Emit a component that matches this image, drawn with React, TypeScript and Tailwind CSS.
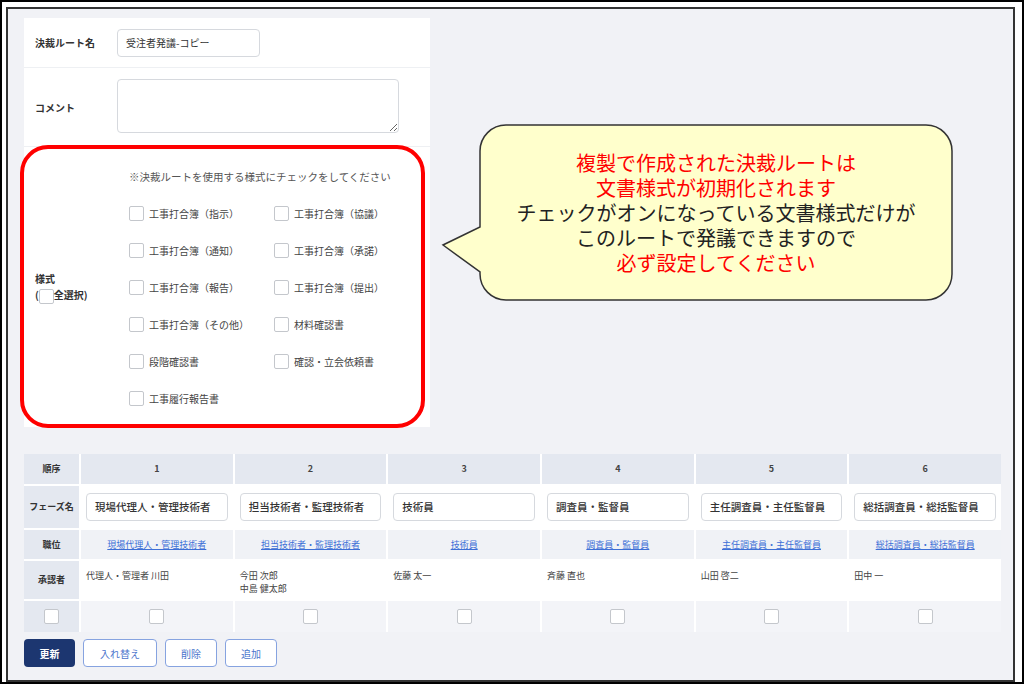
import React from 'react';

// フェーズ一覧
interface Phase {
  no: number;
  name: string;
  post: string;
  approvers: string[];
}

const phases: Phase[] = [
  { no: 1, name: '現場代理人・管理技術者', post: '現場代理人・管理技術者', approvers: ['代理人・管理者 川田'] },
  { no: 2, name: '担当技術者・監理技術者', post: '担当技術者・監理技術者', approvers: ['今田 次郎', '中島 健太郎'] },
  { no: 3, name: '技術員', post: '技術員', approvers: ['佐藤 太一'] },
  { no: 4, name: '調査員・監督員', post: '調査員・監督員', approvers: ['斉藤 直也'] },
  { no: 5, name: '主任調査員・主任監督員', post: '主任調査員・主任監督員', approvers: ['山田 啓二'] },
  { no: 6, name: '総括調査員・総括監督員', post: '総括調査員・総括監督員', approvers: ['田中 一'] },
];

const forms = [
  '工事打合簿（指示）',
  '工事打合簿（協議）',
  '工事打合簿（通知）',
  '工事打合簿（承諾）',
  '工事打合簿（報告）',
  '工事打合簿（提出）',
  '工事打合簿（その他）',
  '材料確認書',
  '段階確認書',
  '確認・立会依頼書',
  '工事履行報告書',
];

function Box({ className = '' }: { className?: string }) {
  return (
    <span
      className={`inline-block h-[15px] w-[15px] shrink-0 rounded-[2px] border border-[#c4c7cc] bg-white ${className}`}
    />
  );
}

export default function App() {
  return (
    <div className="h-[684px] w-[1024px] border-2 border-black bg-white pl-[4px] pr-[7px] pt-[5px] font-['Noto_Sans_CJK_JP','Noto_Sans',sans-serif] text-[#333]">
      <div className="relative h-full border-2 border-[#333] bg-[#f1f2f6] pl-[16px] pt-[9px]">
        {/* 入力フォーム */}
        <div className="w-[406px] bg-white">
          <div className="flex h-[50px] items-center border-b border-[#eef0f3]">
            <div className="w-[93px] pl-[11px] text-[10px] font-bold">決裁ルート名</div>
            <div className="flex h-[28px] w-[143px] items-center rounded-[4px] border border-[#d6d9de] pl-[8px] text-[10px] text-[#333]">
              受注者発議-コピー
            </div>
          </div>
          <div className="flex h-[79px] items-center border-b border-[#eef0f3]">
            <div className="w-[93px] pl-[11px] text-[10px] font-bold">コメント</div>
            <textarea className="mb-[3px] h-[54px] w-[282px] rounded-[4px] border border-[#d6d9de] bg-white" />
          </div>
          <div className="flex h-[280px] items-center">
            <div className="w-[93px] self-center pl-[11px] text-[10px] font-bold leading-[16px]">
              <div>様式</div>
              <div className="flex items-center">
                (<Box className="mt-[2px]" />全選択)
              </div>
            </div>
            <div className="h-full pl-[12px] pt-[11px]">
              <div className="flex h-[37px] items-center text-[10.5px] text-[#555]">
                ※決裁ルートを使用する様式にチェックをしてください
              </div>
              <div className="grid grid-cols-[145px_145px]">
                {forms.map((f) => (
                  <div key={f} className="flex h-[37px] items-center gap-[5px] text-[10px] text-[#444]">
                    <Box />
                    <span>{f}</span>
                  </div>
                ))}
              </div>
            </div>
          </div>
        </div>

        {/* 承認フェーズ表 */}
        <div className="mt-[27px] grid w-[977px] grid-cols-[55px_repeat(6,minmax(0,1fr))] gap-[2px] bg-white text-[9px]">
          <div className="flex h-[30px] items-center justify-center bg-[#e4e8f0] font-bold">順序</div>
          {phases.map((p) => (
            <div key={`h${p.no}`} className="flex h-[30px] items-center justify-center bg-[#e4e8f0] font-bold text-[#444]">
              {p.no}
            </div>
          ))}

          <div className="flex h-[42px] items-center justify-center bg-[#e4e8f0] font-bold">フェーズ名</div>
          {phases.map((p) => (
            <div key={`n${p.no}`} className="flex h-[42px] items-center bg-white px-[5px]">
              <div className="flex h-[28px] w-full items-center rounded-[4px] border border-[#d6d9de] pl-[8px] text-[10.5px] font-medium text-[#333]">
                {p.name}
              </div>
            </div>
          ))}

          <div className="flex h-[29px] items-center justify-center bg-[#e4e8f0] font-bold">職位</div>
          {phases.map((p) => (
            <div key={`p${p.no}`} className="flex h-[29px] items-center justify-center bg-[#f0f2f6]">
              <a className="text-[#3d6fd6] underline">{p.post}</a>
            </div>
          ))}

          <div className="flex h-[38px] items-center justify-center bg-[#e4e8f0] font-bold">承認者</div>
          {phases.map((p) => (
            <div key={`a${p.no}`} className="h-[38px] bg-white px-[5px] pt-[8px] leading-[13px] text-[#444]">
              {p.approvers.map((a) => (
                <div key={a}>{a}</div>
              ))}
            </div>
          ))}

          <div className="flex h-[31px] items-center justify-center bg-[#e4e8f0]">
            <Box />
          </div>
          {phases.map((p) => (
            <div key={`c${p.no}`} className="flex h-[31px] items-center justify-center bg-[#f3f4f8]">
              <Box />
            </div>
          ))}
        </div>

        {/* ボタン */}
        <div className="mt-[7px] flex gap-[8px] text-[10px]">
          <button className="h-[28px] w-[51px] rounded-[4px] bg-[#1c3670] font-bold text-white">更新</button>
          <button className="h-[28px] w-[74px] rounded-[4px] border border-[#86a3e0] bg-white text-[#4a74cc]">入れ替え</button>
          <button className="h-[28px] w-[52px] rounded-[4px] border border-[#86a3e0] bg-white text-[#4a74cc]">削除</button>
          <button className="h-[28px] w-[52px] rounded-[4px] border border-[#86a3e0] bg-white text-[#4a74cc]">追加</button>
        </div>

        {/* 注釈：赤枠 */}
        <div className="pointer-events-none absolute left-[12px] top-[136px] h-[283px] w-[405px] rounded-[28px] border-4 border-[#ff0000]" />

        {/* 注釈：吹き出し */}
        <svg className="absolute left-[432px] top-[111px]" width="516" height="184" viewBox="0 0 516 184">
          <path
            d="M66,5 H486 A26,26 0 0 1 512,31 V154 A26,26 0 0 1 486,180 H66 A26,26 0 0 1 40,154 V152 L3,125 L40,107 V31 A26,26 0 0 1 66,5 Z"
            fill="#ffffcc"
            stroke="#333"
            strokeWidth="1.5"
          />
        </svg>
        <div className="absolute left-[472px] top-[116px] flex h-[175px] w-[472px] flex-col items-center justify-center text-center text-[20px] leading-[25px] text-[#222]">
          <div className="text-[#ff0000]">複製で作成された決裁ルートは</div>
          <div className="text-[#ff0000]">文書様式が初期化されます</div>
          <div>チェックがオンになっている文書様式だけが</div>
          <div>このルートで発議できますので</div>
          <div className="text-[#ff0000]">必ず設定してください</div>
        </div>
      </div>
    </div>
  );
}
